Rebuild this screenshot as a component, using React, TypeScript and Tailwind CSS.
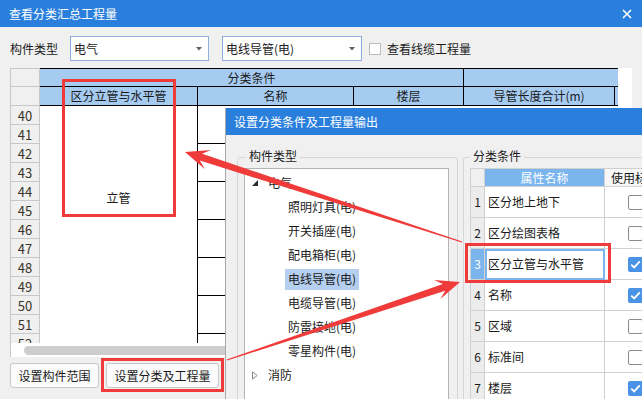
import React from 'react';

const RED = '#f03b3b';
const BLUE = '#2b7fdc';

const gridRows = [40, 41, 42, 43, 44, 45, 46, 47, 48, 49, 50, 51, 52];

const treeItems = [
  { label: '电气', level: 0, open: true },
  { label: '照明灯具(电)', level: 1 },
  { label: '开关插座(电)', level: 1 },
  { label: '配电箱柜(电)', level: 1 },
  { label: '电线导管(电)', level: 1, selected: true },
  { label: '电缆导管(电)', level: 1 },
  { label: '防雷接地(电)', level: 1 },
  { label: '零星构件(电)', level: 1 },
  { label: '消防', level: 0, open: false },
];

const conditions = [
  { name: '区分地上地下', used: false },
  { name: '区分绘图表格', used: false },
  { name: '区分立管与水平管', used: true, active: true },
  { name: '名称', used: true },
  { name: '区域', used: false },
  { name: '标准间', used: false },
  { name: '楼层', used: true },
];

function arrowPoints(x1: number, y1: number, x2: number, y2: number) {
  const dx = x2 - x1;
  const dy = y2 - y1;
  const len = Math.hypot(dx, dy);
  const ux = dx / len;
  const uy = dy / len;
  const nx = -uy;
  const ny = ux;
  const hl = 24;
  const hw = 10;
  const sw = 3.6;
  const tw = 0.6;
  const bx = x2 - ux * hl * 0.7;
  const by = y2 - uy * hl * 0.7;
  const wx = x2 - ux * hl;
  const wy = y2 - uy * hl;
  const pts = [
    [x1 + nx * tw, y1 + ny * tw],
    [bx + nx * sw, by + ny * sw],
    [wx + nx * hw, wy + ny * hw],
    [x2, y2],
    [wx - nx * hw, wy - ny * hw],
    [bx - nx * sw, by - ny * sw],
    [x1 - nx * tw, y1 - ny * tw],
  ];
  return pts.map((p) => `${p[0].toFixed(1)},${p[1].toFixed(1)}`).join(' ');
}

function Combo({ value, className }: { value: string; className: string }) {
  return (
    <div
      className={`h-full bg-white border border-[#8eaee0] flex items-center justify-between pl-[3px] pr-[6px] ${className}`}
    >
      <span>{value}</span>
      <svg width="6" height="4" viewBox="0 0 6 4">
        <path d="M0 0H6L3 3.5Z" fill="#606060" />
      </svg>
    </div>
  );
}

function CheckBox({ checked }: { checked: boolean }) {
  if (checked) {
    return (
      <span className="w-[15px] h-[15px] rounded-[2px] bg-[#4a92e6] flex items-center justify-center">
        <svg width="11" height="9" viewBox="0 0 11 9">
          <path d="M1.2 4.6L4.2 7.4L9.8 1.4" fill="none" stroke="white" strokeWidth="1.8" />
        </svg>
      </span>
    );
  }
  return <span className="w-[15px] h-[15px] rounded-[2px] bg-white border border-[#8c8c8c]" />;
}

function Grid() {
  return (
    <div className="mt-[7px] ml-[10px] w-[622px] h-[289px] shrink-0 flex flex-col bg-white border-l border-[#c8c8c8] overflow-hidden">
      <div className="flex h-[275px] overflow-hidden">
        {/* row numbers */}
        <div className="w-[29px] shrink-0 flex flex-col bg-[#f0f0f0] border-r border-[#c8c8c8] text-[#3a3428]">
          <div className="h-[19px] shrink-0 border-y border-[#c8c8c8]" />
          <div className="h-[19px] shrink-0 border-b border-[#c8c8c8]" />
          {gridRows.map((n) => (
            <div key={n} className="h-[19px] shrink-0 border-b border-[#c8c8c8] flex items-center justify-center text-[13px]">
              {n}
            </div>
          ))}
        </div>

        {/* data */}
        <div className="w-[578px] shrink-0 flex flex-col">
          <div className="h-[19px] shrink-0 flex bg-[#a6cbf0] border-y border-black">
            <div className="w-[424px] border-r border-black flex items-center justify-center">分类条件</div>
            <div className="flex-1" />
          </div>
          <div className="h-[19px] shrink-0 flex bg-[#a6cbf0] border-b border-black">
            <div className="w-[158px] border-r border-black flex items-center justify-center">区分立管与水平管</div>
            <div className="w-[156px] border-r border-black flex items-center justify-center">名称</div>
            <div className="w-[110px] border-r border-black flex items-center justify-center">楼层</div>
            <div className="w-[151px] border-r border-black flex items-center justify-center">导管长度合计(m)</div>
            <div className="flex-1" />
          </div>
          <div className="flex flex-1">
            <div className="w-[157px] shrink-0 flex justify-center pt-[86px]">
              <span>立管</span>
            </div>
            <div className="w-[156px] shrink-0 border-l border-black flex flex-col">
              {[0, 1, 2, 3, 4, 5, 6].map((i) => (
                <div key={i} className="h-[38px] shrink-0 border-b border-black" />
              ))}
            </div>
          </div>
        </div>

        <div className="flex-1 bg-white" />
      </div>

      {/* horizontal scrollbar */}
      <div className="h-[14px] shrink-0 bg-white pt-[3px] pl-[13px]">
        <div className="h-[9px] w-[600px] rounded-full bg-[#cdcdcd]" />
      </div>
    </div>
  );
}

function MainWindow() {
  return (
    <div className="flex flex-col h-full">
      <div className="h-[27px] shrink-0 flex items-center justify-between pl-[9px] pr-[10px] text-white" style={{ background: BLUE }}>
        <span>查看分类汇总工程量</span>
        <svg width="10" height="10" viewBox="0 0 10 10">
          <path d="M1 1L9 9M9 1L1 9" stroke="white" strokeWidth="1.6" />
        </svg>
      </div>

      <div className="mt-[9px] h-[25px] shrink-0 flex items-center">
        <span className="w-[70px] shrink-0 pl-[10px]">构件类型</span>
        <Combo value="电气" className="w-[139px]" />
        <Combo value="电线导管(电)" className="ml-[13px] w-[140px]" />
        <span className="ml-[7px] w-[12px] h-[12px] bg-white border border-[#bcbcbc]" />
        <span className="ml-[6px]">查看线缆工程量</span>
      </div>

      <Grid />

      <div className="mt-[6px] flex gap-[7px] pl-[10px]">
        <button className="w-[89px] h-[25px] bg-[#fbfbfb] border border-[#c8c8c8] rounded-[3px] flex items-center justify-center">
          设置构件范围
        </button>
        <button className="w-[113px] h-[25px] bg-[#fbfbfb] border border-[#c8c8c8] rounded-[3px] flex items-center justify-center">
          设置分类及工程量
        </button>
      </div>
    </div>
  );
}

function SettingsDialog() {
  return (
    <div className="absolute left-[225px] top-[108px] w-[417px] h-[291px] bg-[#f0f0f0] border-l border-[#a8a8a8] flex flex-col overflow-hidden">
      <div className="h-[27px] shrink-0 flex items-center pl-[8px] text-white" style={{ background: BLUE }}>
        设置分类条件及工程量输出
      </div>

      <div className="flex gap-[5px] pl-[11px] pt-[22px]">
        {/* component type */}
        <div className="relative w-[221px] h-[260px] shrink-0 border border-[#d6d6d6] rounded-[3px] pt-[10px] pl-[6px]">
          <span className="absolute -top-[8px] left-[8px] px-[3px] bg-[#f0f0f0]">构件类型</span>
          <div className="w-[205px] h-[250px] bg-white border border-[#b4b4b4] pt-[2px]">
            {treeItems.map((item) => (
              <div key={item.label} className="h-[24px] flex items-center">
                {item.level === 0 ? (
                  <>
                    <span className="w-[7px] ml-[7px] flex items-center">
                      {item.open ? (
                        <svg width="6" height="6" viewBox="0 0 6 6">
                          <path d="M6 0V6H0Z" fill="#2a2a2a" />
                        </svg>
                      ) : (
                        <svg width="6" height="9" viewBox="0 0 6 9">
                          <path d="M0.5 0.8L5.2 4.5L0.5 8.2Z" fill="none" stroke="#8a8a8a" />
                        </svg>
                      )}
                    </span>
                    <span className="ml-[9px]">{item.label}</span>
                  </>
                ) : (
                  <span
                    className={`ml-[40px] h-[21px] px-[3px] flex items-center ${item.selected ? 'bg-[#b4cff0]' : ''}`}
                  >
                    {item.label}
                  </span>
                )}
              </div>
            ))}
          </div>
        </div>

        {/* conditions */}
        <div className="relative flex-1 h-[260px] border border-r-0 border-[#d6d6d6] rounded-l-[3px] pt-[10px] pl-[6px]">
          <span className="absolute -top-[8px] left-[6px] px-[3px] bg-[#f0f0f0]">分类条件</span>
          <div className="flex flex-col border-l border-t border-[#d0d0d0] bg-white">
            <div className="h-[18px] flex">
              <div className="w-[14px] shrink-0 bg-[#f0f0f0] border-r border-b border-[#d0d0d0]" />
              <div className="w-[120px] shrink-0 bg-[#7ab5ee] border-r border-b border-[#d0d0d0] text-white flex items-center justify-center">
                属性名称
              </div>
              <div className="flex-1 bg-[#f7f7f7] border-b border-[#d0d0d0] flex items-center pl-[6px] whitespace-nowrap">
                使用标志
              </div>
            </div>
            {conditions.map((c, i) => (
              <div key={c.name} className="h-[31px] flex">
                <div
                  className={`w-[14px] shrink-0 border-r border-b border-[#d0d0d0] flex items-center justify-center ${
                    c.active ? 'bg-[#7ab5ee] text-white' : 'bg-[#ececec]'
                  }`}
                >
                  {i + 1}
                </div>
                <div
                  className={`w-[120px] shrink-0 border-r border-b border-[#d0d0d0] flex items-center pl-[3px] ${
                    c.active ? 'outline-2 -outline-offset-2 outline-[#7ab5ee]' : ''
                  }`}
                >
                  {c.name}
                </div>
                <div className="flex-1 border-b border-[#d0d0d0] flex items-center pl-[23px]">
                  <CheckBox checked={c.used} />
                </div>
              </div>
            ))}
          </div>
        </div>
      </div>
    </div>
  );
}

function Annotations() {
  return (
    <svg className="absolute inset-0 pointer-events-none" width="642" height="399" viewBox="0 0 642 399">
      <rect x="63.5" y="80.5" width="111" height="135" fill="none" stroke={RED} strokeWidth="3" />
      <rect x="102.5" y="359.5" width="120" height="31" fill="none" stroke={RED} strokeWidth="3" />
      <rect x="466.5" y="244.5" width="143" height="37" fill="none" stroke={RED} strokeWidth="3" />
      <polygon points={arrowPoints(462, 242, 185, 152)} fill={RED} />
      <polygon points={arrowPoints(227, 360, 460, 282)} fill={RED} />
    </svg>
  );
}

export default function App() {
  return (
    <div className="relative w-[642px] h-[399px] overflow-hidden bg-[#f0f0f0] font-['Noto_Sans_CJK_SC','Noto_Sans',sans-serif] text-[12px] leading-none text-[#1a1a1a]">
      <MainWindow />
      <SettingsDialog />
      <Annotations />
    </div>
  );
}
